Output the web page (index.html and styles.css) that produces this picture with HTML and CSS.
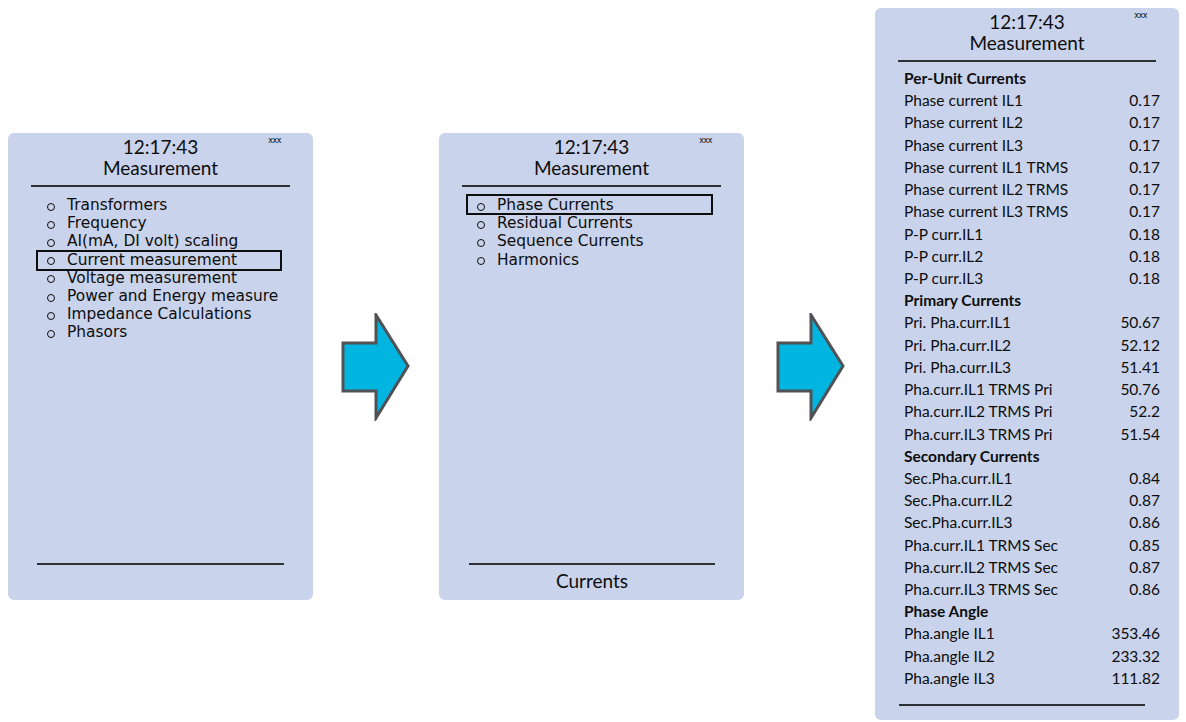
FILE: index.html
```html
<!DOCTYPE html>
<html lang="en">
<head>
  <meta charset="UTF-8">
  <title>Measurement navigation</title>
  <link rel="stylesheet" href="styles.css">
</head>
<body>
  <main class="flow">

    <section class="screen screen-short">
      <header class="screen-head">
        <span class="tag">xxx</span>
        <div class="clock">12:17:43</div>
        <div class="title">Measurement</div>
      </header>
      <ul class="menu">
        <li>Transformers</li>
        <li>Frequency</li>
        <li>AI(mA, DI volt) scaling</li>
        <li class="selected">Current measurement</li>
        <li>Voltage measurement</li>
        <li>Power and Energy measure</li>
        <li>Impedance Calculations</li>
        <li>Phasors</li>
      </ul>
      <footer class="screen-foot first-foot"></footer>
    </section>

    <svg class="arrow" width="70" height="108" viewBox="0 0 70 108">
      <polygon points="2,30 35,30 35,2 67,53 35,105 35,78 2,78" />
    </svg>

    <section class="screen screen-short">
      <header class="screen-head">
        <span class="tag">xxx</span>
        <div class="clock">12:17:43</div>
        <div class="title">Measurement</div>
      </header>
      <ul class="menu menu-sub">
        <li class="selected">Phase Currents</li>
        <li>Residual Currents</li>
        <li>Sequence Currents</li>
        <li>Harmonics</li>
      </ul>
      <footer class="screen-foot">Currents</footer>
    </section>

    <svg class="arrow" width="70" height="108" viewBox="0 0 70 108">
      <polygon points="2,30 35,30 35,2 67,53 35,105 35,78 2,78" />
    </svg>

    <section class="screen screen-tall">
      <header class="screen-head">
        <span class="tag">xxx</span>
        <div class="clock">12:17:43</div>
        <div class="title">Measurement</div>
      </header>
      <div class="values">
        <div class="group">Per-Unit Currents</div>
        <div class="row"><span>Phase current IL1</span><span>0.17</span></div>
        <div class="row"><span>Phase current IL2</span><span>0.17</span></div>
        <div class="row"><span>Phase current IL3</span><span>0.17</span></div>
        <div class="row"><span>Phase current IL1 TRMS</span><span>0.17</span></div>
        <div class="row"><span>Phase current IL2 TRMS</span><span>0.17</span></div>
        <div class="row"><span>Phase current IL3 TRMS</span><span>0.17</span></div>
        <div class="row"><span>P-P curr.IL1</span><span>0.18</span></div>
        <div class="row"><span>P-P curr.IL2</span><span>0.18</span></div>
        <div class="row"><span>P-P curr.IL3</span><span>0.18</span></div>
        <div class="group">Primary Currents</div>
        <div class="row"><span>Pri. Pha.curr.IL1</span><span>50.67</span></div>
        <div class="row"><span>Pri. Pha.curr.IL2</span><span>52.12</span></div>
        <div class="row"><span>Pri. Pha.curr.IL3</span><span>51.41</span></div>
        <div class="row"><span>Pha.curr.IL1 TRMS Pri</span><span>50.76</span></div>
        <div class="row"><span>Pha.curr.IL2 TRMS Pri</span><span>52.2</span></div>
        <div class="row"><span>Pha.curr.IL3 TRMS Pri</span><span>51.54</span></div>
        <div class="group">Secondary Currents</div>
        <div class="row"><span>Sec.Pha.curr.IL1</span><span>0.84</span></div>
        <div class="row"><span>Sec.Pha.curr.IL2</span><span>0.87</span></div>
        <div class="row"><span>Sec.Pha.curr.IL3</span><span>0.86</span></div>
        <div class="row"><span>Pha.curr.IL1 TRMS Sec</span><span>0.85</span></div>
        <div class="row"><span>Pha.curr.IL2 TRMS Sec</span><span>0.87</span></div>
        <div class="row"><span>Pha.curr.IL3 TRMS Sec</span><span>0.86</span></div>
        <div class="group">Phase Angle</div>
        <div class="row"><span>Pha.angle IL1</span><span>353.46</span></div>
        <div class="row"><span>Pha.angle IL2</span><span>233.32</span></div>
        <div class="row"><span>Pha.angle IL3</span><span>111.82</span></div>
      </div>
      <footer class="screen-foot last-foot"></footer>
    </section>

  </main>
</body>
</html>
```

FILE: styles.css
```css
:root {
  --panel: #c9d3eb;
  --ink: #0d0d0d;
  --rule: #2e3035;
  --arrow: #00b5e0;
  --arrow-edge: #505256;
}

* {
  margin: 0;
  padding: 0;
  box-sizing: border-box;
}

body {
  background: #ffffff;
  color: var(--ink);
  font-family: Lato, 'Open Sans', sans-serif;
}

.flow {
  display: flex;
  align-items: center;
  height: 722px;
  padding: 11px 0 0 8px;
}

/* Screens */
.screen {
  background: var(--panel);
  border-radius: 6px;
  display: flex;
  flex-direction: column;
  width: 305px;
  flex-shrink: 0;
}

.screen-short {
  height: 467px;
}

.screen-tall {
  width: 304px;
  height: 712px;
  align-self: flex-start;
  margin-top: -3px;
}

.screen-head {
  position: relative;
  margin: 0 23px;
  padding-top: 4px;
  height: 54px;
  border-bottom: 2px solid var(--rule);
  text-align: center;
  font-size: 19px;
}

.clock {
  line-height: 20px;
}

.title {
  line-height: 21px;
}

.tag {
  position: absolute;
  right: 9px;
  top: 3px;
  font-family: 'DejaVu Sans', sans-serif;
  font-size: 8px;
  letter-spacing: -0.5px;
}

/* Menu lists */
.menu {
  list-style: none;
  flex: 1;
  padding: 9px 0 0 28px;
  font-family: 'DejaVu Sans', Verdana, sans-serif;
  font-size: 15.4px;
}

.menu li {
  position: relative;
  line-height: 18.2px;
  padding-left: 31px;
}

.menu li::before {
  content: '';
  position: absolute;
  left: 11px;
  top: 6.5px;
  width: 6px;
  height: 6px;
  border: 1.7px solid var(--ink);
  border-radius: 50%;
}

.menu li.selected::after {
  content: '';
  position: absolute;
  left: 0;
  right: 31px;
  top: -1px;
  bottom: -2px;
  border: 2px solid var(--ink);
}

.menu-sub {
  padding-left: 27px;
}

.menu-sub li.selected::after {
  right: 31px;
  top: -2px;
  bottom: -1px;
}

/* Footers */
.screen-foot {
  height: 37px;
  margin: 0 29px 0 30px;
  border-top: 2px solid var(--rule);
  text-align: center;
  font-size: 19px;
  line-height: 32px;
}

.first-foot {
  margin-left: 29px;
  margin-right: 29px;
}

/* Value table */
.values {
  flex: 1;
  padding: 5px 19px 0 29px;
  font-size: 15.5px;
}

.group,
.row {
  line-height: 22.22px;
  height: 22.22px;
}

.group {
  font-weight: 700;
}

.row {
  display: flex;
  justify-content: space-between;
}

.last-foot {
  height: 16px;
  margin: 0 34px 0 24px;
}

/* Arrows */
.arrow {
  flex-shrink: 0;
  margin: 0 28px 0 28px;
}

.arrow:last-of-type {
  margin: 0 29px 0 32px;
}

.arrow polygon {
  fill: var(--arrow);
  stroke: var(--arrow-edge);
  stroke-width: 3;
}
```
